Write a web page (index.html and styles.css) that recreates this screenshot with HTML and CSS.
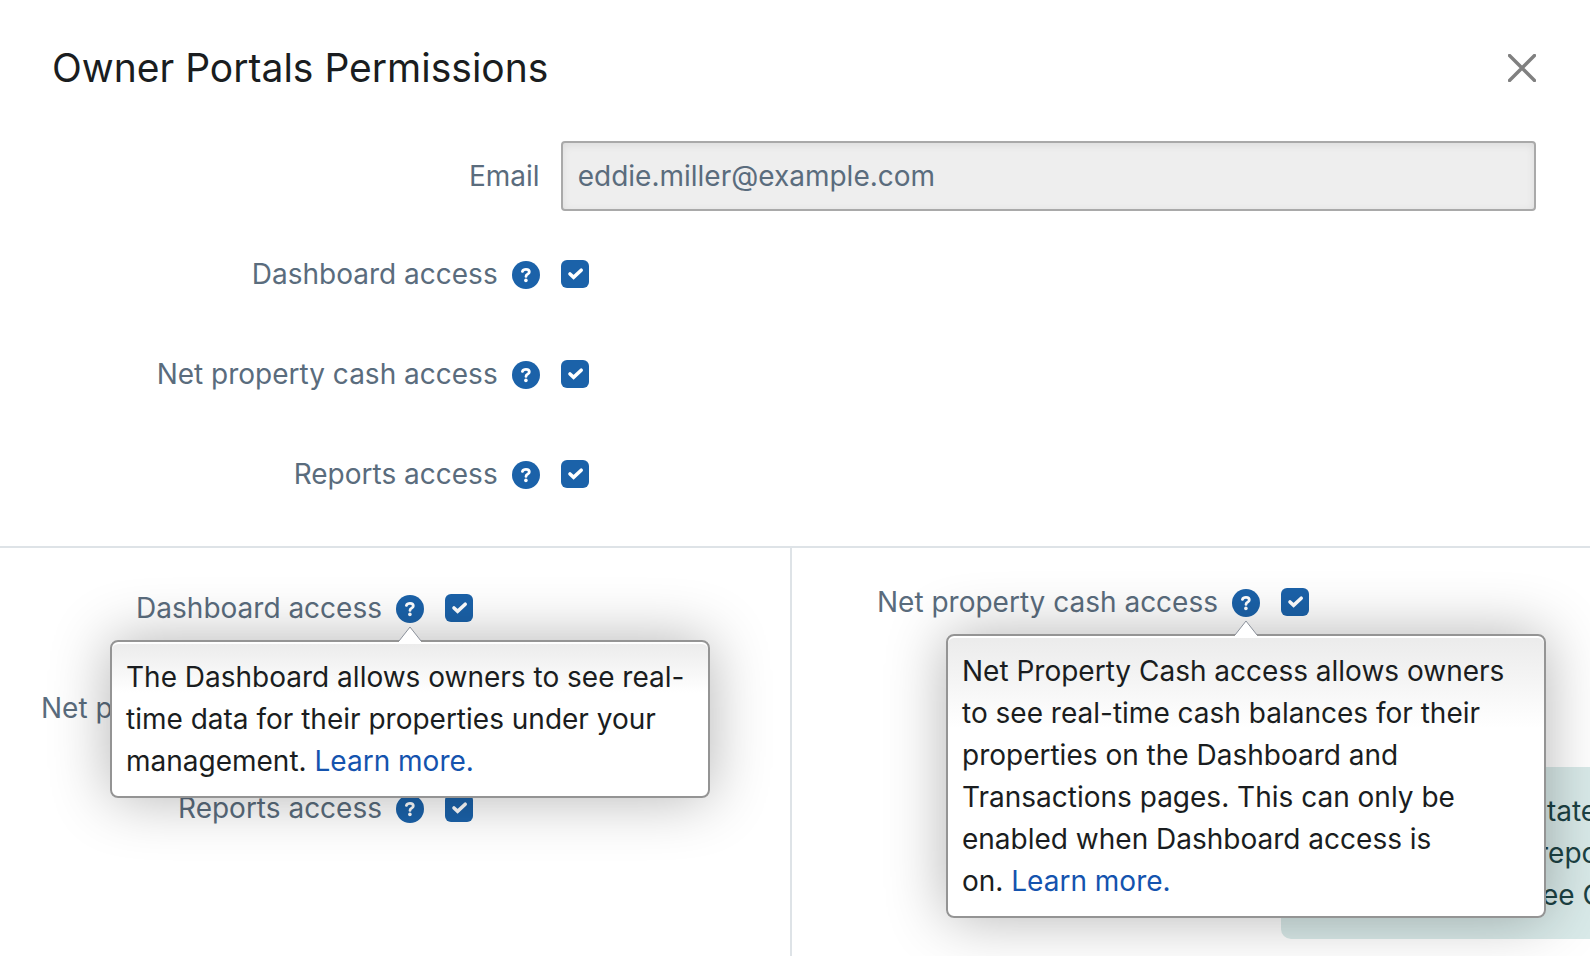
FILE: index.html
```html
<!DOCTYPE html>
<html lang="en">
<head>
<meta charset="utf-8">
<title>Owner Portals Permissions</title>
<link rel="stylesheet" href="styles.css">
</head>
<body>
<svg class="sprite" aria-hidden="true">
  <symbol id="help" viewBox="0 0 28 28">
    <circle cx="14" cy="14" r="14" fill="#1b62a9"/>
    <path d="M10.4 10.4C11 8.9 12.2 8.4 14 8.4C16.1 8.4 17.3 9.4 17.3 11C17.3 13.3 14 13 14 15.4" fill="none" stroke="#fff" stroke-width="2.8" stroke-linecap="round" stroke-linejoin="round"/>
    <circle cx="13.9" cy="19.4" r="1.8" fill="#fff"/>
  </symbol>
</svg>
<main class="page">
  <section class="dialog">
    <header class="header">
      <h1 class="title">Owner Portals Permissions</h1>
      <button class="close" type="button" aria-label="Close">
        <svg class="close-icon" viewBox="0 0 28 28"><path d="M1.5 1.5L26.5 26.5M26.5 1.5L1.5 26.5" fill="none" stroke="#808080" stroke-width="3.4" stroke-linecap="round"/></svg>
      </button>
    </header>
    <form class="form">
      <div class="row row--email">
        <div class="label-cell"><label for="email">Email</label></div>
        <input class="email" id="email" type="email" value="eddie.miller@example.com" readonly>
      </div>
      <div class="row">
        <div class="label-cell"><label for="dash">Dashboard access</label><button class="help" type="button" aria-label="Help"><svg class="help-icon"><use href="#help"/></svg></button></div>
        <input class="check" id="dash" type="checkbox" checked>
      </div>
      <div class="row">
        <div class="label-cell"><label for="cash">Net property cash access</label><button class="help" type="button" aria-label="Help"><svg class="help-icon"><use href="#help"/></svg></button></div>
        <input class="check" id="cash" type="checkbox" checked>
      </div>
      <div class="row">
        <div class="label-cell"><label for="reports">Reports access</label><button class="help" type="button" aria-label="Help"><svg class="help-icon"><use href="#help"/></svg></button></div>
        <input class="check" id="reports" type="checkbox" checked>
      </div>
    </form>
  </section>
  <div class="panels">
    <section class="panel panel--left">
      <div class="row">
        <div class="label-cell"><label for="dash2">Dashboard access</label>
          <div class="help-wrap">
            <button class="help" type="button" aria-label="Help" aria-describedby="tip-dash"><svg class="help-icon"><use href="#help"/></svg></button>
            <div class="popover" id="tip-dash" role="tooltip">
              <svg class="arrow" viewBox="0 0 24 18"><path d="M1 16L12 2L23 16V18H1Z" fill="#fff"/><path d="M1 16L12 2L23 16" fill="none" stroke="#8b919b"/></svg>
              The Dashboard allows owners to see real-time data for their properties under your management. <a class="link" href="#">Learn more.</a>
            </div>
          </div>
        </div>
        <input class="check" id="dash2" type="checkbox" checked>
      </div>
      <div class="row">
        <div class="label-cell"><label for="cash2">Net property cash access</label><button class="help" type="button" aria-label="Help"><svg class="help-icon"><use href="#help"/></svg></button></div>
        <input class="check" id="cash2" type="checkbox" checked>
      </div>
      <div class="row">
        <div class="label-cell"><label for="reports2">Reports access</label><button class="help" type="button" aria-label="Help"><svg class="help-icon"><use href="#help"/></svg></button></div>
        <input class="check" id="reports2" type="checkbox" checked>
      </div>
    </section>
    <section class="panel panel--right">
      <div class="row">
        <div class="label-cell"><label for="cash3">Net property cash access</label>
          <div class="help-wrap">
            <button class="help" type="button" aria-label="Help" aria-describedby="tip-cash"><svg class="help-icon"><use href="#help"/></svg></button>
            <div class="popover" id="tip-cash" role="tooltip">
              <svg class="arrow" viewBox="0 0 24 18"><path d="M1 16L12 2L23 16V18H1Z" fill="#fff"/><path d="M1 16L12 2L23 16" fill="none" stroke="#8b919b"/></svg>
              Net Property Cash access allows owners to see real-time cash balances for their properties on the Dashboard and Transactions pages. This can only be enabled when Dashboard access is on.&nbsp;<a class="link" href="#">Learn more.</a>
            </div>
          </div>
        </div>
        <input class="check" id="cash3" type="checkbox" checked>
      </div>
      <div class="notice">
        <p class="notice-line notice-line--first">State</p>
        <p class="notice-line notice-line--indent">repo</p>
        <p class="notice-line">See C</p>
      </div>
    </section>
  </div>
</main>
</body>
</html>
```

FILE: styles.css
```css
* { box-sizing: border-box; }

body {
  margin: 0;
  background: #fff;
  color: #1a1d20;
  font: 28px/42px Inter, "Liberation Sans", sans-serif;
}

.sprite {
  position: absolute;
  width: 0;
  height: 0;
}

.page {
  display: flex;
  flex-direction: column;
  min-height: 100vh;
  overflow: hidden;
}

.dialog {
  padding: 38px 54px 51px 52px;
  border-bottom: 2px solid #dee3e7;
}

.header {
  display: flex;
  align-items: center;
  justify-content: space-between;
  margin-bottom: 43px;
}

.title {
  margin: 0;
  font-size: 39px;
  line-height: 60px;
  font-weight: 400;
}

.close,
.help {
  display: block;
  padding: 0;
  border: 0;
  background: none;
  cursor: pointer;
}

.close-icon,
.help-icon {
  display: block;
  width: 28px;
  height: 28px;
}

.form,
.panel {
  display: flex;
  flex-direction: column;
  gap: 58px;
}

.row {
  display: grid;
  grid-template-columns: 1fr 2fr;
  column-gap: 21px;
  align-items: center;
}

.row--email { margin-bottom: -16px; }

.label-cell {
  display: flex;
  align-items: center;
  justify-content: flex-end;
  gap: 14px;
  color: #5a6c7d;
  white-space: nowrap;
}

.label-cell .help { margin-top: 2px; }

.email {
  width: 100%;
  height: 70px;
  padding: 0 15px;
  border: 2px solid #a9a9a9;
  border-radius: 4px;
  background: #eee;
  box-shadow: inset 0 2px 8px rgba(0, 0, 0, 0.08);
  color: #5a6c7d;
  font: inherit;
  outline: 0;
}

.check {
  appearance: none;
  width: 28px;
  height: 28px;
  margin: 0;
  border-radius: 6px;
  background: #1b62a9;
}

.check:checked {
  background-image: url("data:image/svg+xml,%3Csvg xmlns='http://www.w3.org/2000/svg' viewBox='0 0 28 28'%3E%3Cpath d='M9 14L12.6 17.3L20.2 10.2' fill='none' stroke='white' stroke-width='3.6' stroke-linecap='round' stroke-linejoin='miter'/%3E%3C/svg%3E");
}

.panels {
  display: grid;
  grid-template-columns: minmax(0, 792fr) minmax(0, 798fr);
  flex: 1;
}

.panel--left {
  padding-top: 39px;
  border-right: 2px solid #dee3e7;
}

.panel--left .row { grid-template-columns: 424px 1fr; }

.panel--right {
  padding-top: 33px;
  gap: 144px;
}

.panel--right .row { grid-template-columns: 468px 1fr; }

.help-wrap { position: relative; }

.popover {
  position: absolute;
  z-index: 2;
  top: calc(100% + 17px);
  left: 50%;
  width: 600px;
  padding: 14px;
  transform: translateX(-50%);
  border: 2px solid #949494;
  border-radius: 8px;
  background: linear-gradient(#ebebeb, #fff 33%);
  box-shadow: inset 0 2px 0 #fff, 0 0 60px rgba(0, 0, 0, 0.3);
  color: #1a1d20;
  white-space: normal;
}

.arrow {
  position: absolute;
  top: -17px;
  left: 50%;
  width: 24px;
  height: 18px;
  transform: translateX(-50%);
}

.link {
  color: #1453ae;
  text-decoration: none;
}

.notice {
  margin-left: 489px;
  padding: 23px 0 23px 243px;
  overflow: hidden;
  border-radius: 10px 0 0 10px;
  background: #d9eae9;
  color: #1c4244;
  white-space: nowrap;
}

.notice-line { margin: 0; }

.notice-line--first { padding-left: 5px; }

.notice-line--indent { padding-left: 14px; }
```
